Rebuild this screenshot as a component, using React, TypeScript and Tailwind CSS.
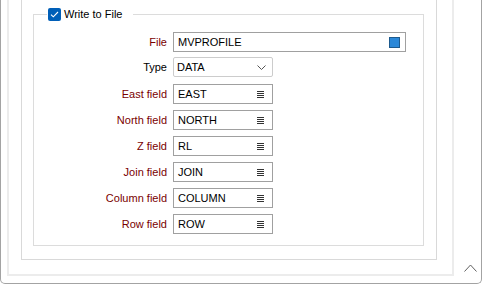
import React from "react";

const font = { fontFamily: '"Liberation Sans", Arial, sans-serif' };

// little list icon used on the field pickers
const ListIcon = () => (
  <svg width="7" height="8" viewBox="0 0 7 8" className="shrink-0">
    <path d="M0 1.5H7M0 3.5H7M0 5.5H7M0 7.5H7" stroke="#333" strokeWidth="1" />
  </svg>
);

const fields = [
  { label: "East field", value: "EAST" },
  { label: "North field", value: "NORTH" },
  { label: "Z field", value: "RL" },
  { label: "Join field", value: "JOIN" },
  { label: "Column field", value: "COLUMN" },
  { label: "Row field", value: "ROW" },
];

const App = () => {
  return (
    <div className="w-[482px] h-[285px] bg-white overflow-hidden text-[11px] text-black" style={font}>
      <div className="h-[284px] flex border-x border-b border-[#a3a3a3] rounded-b-[5px]">
        {/* inner frame */}
        <div className="w-[447px] ml-[6px] mt-0 flex flex-col border-x-2 border-b-2 border-[#ececec] pl-[12px] pr-[15px] pb-[14px] mb-[7px]">
          <div className="flex-1 flex flex-col border-x border-b border-[#d9d9d9] pl-[11px] pr-[12px] pb-[13px]">
            {/* group box */}
            <div className="relative mt-[14px] flex-1 border border-[#dcdcdc] pt-[17px] pb-[10px]">
              <div className="absolute -top-[8px] left-[13px] flex items-center gap-[3px] bg-white pl-[1px] pr-[11px]">
                <div className="w-[13px] h-[13px] rounded-[2px] bg-[#005fb8] flex items-center justify-center">
                  <svg width="9" height="7" viewBox="0 0 9 7">
                    <path d="M1 3.6L3.3 5.8L8 1" fill="none" stroke="white" strokeWidth="1.1" />
                  </svg>
                </div>
                <span className="leading-[14px]">Write to File</span>
              </div>

              <div className="flex flex-col">
                <div className="flex items-center h-[20px]">
                  <span className="w-[133px] text-right text-[#7a0000]">File</span>
                  <div className="ml-[6px] w-[233px] h-[20px] border border-[#a0a0a0] flex items-center pl-[4px] pr-[5px]">
                    <span className="flex-1">MVPROFILE</span>
                    <div className="w-[11px] h-[11px] bg-[#2b88d8] border border-[#1d5a8e]" />
                  </div>
                </div>

                <div className="flex items-center h-[20px] mt-[5px]">
                  <span className="w-[133px] text-right">Type</span>
                  <div className="ml-[6px] w-[100px] h-[20px] border border-[#cccccc] rounded-[2px] flex items-center pl-[3px] pr-[6px]">
                    <span className="flex-1">DATA</span>
                    <svg width="9" height="5" viewBox="0 0 9 5">
                      <path d="M0.5 0.5L4.5 4.5L8.5 0.5" fill="none" stroke="#555" strokeWidth="1" />
                    </svg>
                  </div>
                </div>

                {fields.map((f, i) => (
                  <div key={f.label} className={`flex items-center h-[20px] ${i === 0 ? "mt-[7px]" : "mt-[6px]"}`}>
                    <span className="w-[133px] text-right text-[#7a0000]">{f.label}</span>
                    <div className="ml-[6px] w-[100px] h-[20px] border border-[#a0a0a0] flex items-center pl-[4px] pr-[8px]">
                      <span className="flex-1">{f.value}</span>
                      <ListIcon />
                    </div>
                  </div>
                ))}
              </div>
            </div>
          </div>
        </div>

        {/* right gutter with the collapse chevron */}
        <div className="flex-1 flex flex-col justify-end items-center pb-[11px] pl-[5px]">
          <svg width="13" height="8" viewBox="0 0 13 8">
            <path d="M0.5 7.5L6.5 1L12.5 7.5" fill="none" stroke="#606060" strokeWidth="1" />
          </svg>
        </div>
      </div>
    </div>
  );
};

export default App;
